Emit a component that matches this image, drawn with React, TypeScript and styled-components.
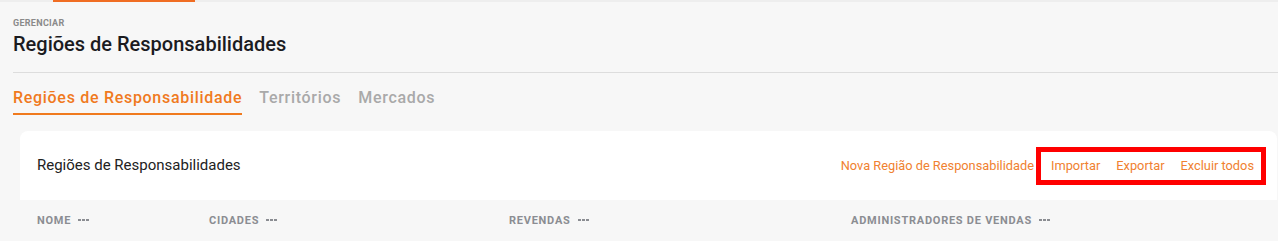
import styled, { createGlobalStyle } from "styled-components";

const GlobalStyle = createGlobalStyle`
  html, body {
    margin: 0;
    padding: 0;
    background: #f7f7f7;
    font-family: Roboto, "Liberation Sans", sans-serif;
  }
`;

const TopStrip = styled.div`
  height: 2px;
  background: #eeeeee;
  display: flex;
`;

const TopMark = styled.div`
  margin-left: 53px;
  width: 142px;
  height: 2px;
  background: #f06d23;
`;

const Page = styled.div`
  padding: 0 0 0 13px;
`;

const Header = styled.header`
  padding-top: 16px;
  height: 54px;
  border-bottom: 1px solid #dddddd;
`;

const Eyebrow = styled.div`
  font-size: 9px;
  font-weight: 700;
  color: #8a8a8a;
  letter-spacing: 0.3px;
  line-height: 11px;
`;

const Title = styled.h1`
  margin: 3px 0 0;
  font-size: 20px;
  font-weight: 500;
  color: #1b1b1f;
  line-height: 24px;
`;

const Tabs = styled.nav`
  display: flex;
  gap: 17px;
  padding-top: 14px;
`;

const Tab = styled.div<{ $active?: boolean }>`
  font-size: 16px;
  font-weight: 500;
  letter-spacing: 0.7px;
  line-height: 22px;
  padding-bottom: 4px;
  color: ${(p) => (p.$active ? "#f07a1e" : "#a9a9a9")};
  border-bottom: 2px solid ${(p) => (p.$active ? "#f07a1e" : "transparent")};
`;

const Card = styled.section`
  margin: 16px 1px 0 7px;
  background: #ffffff;
  border-radius: 8px 8px 0 0;
  overflow: hidden;
`;

const CardHead = styled.div`
  height: 69px;
  display: flex;
  align-items: center;
  justify-content: space-between;
  padding: 0 11px 0 17px;
`;

const CardTitle = styled.h2`
  margin: 0 0 2px;
  font-size: 15px;
  font-weight: 400;
  color: #222222;
`;

const Actions = styled.div`
  display: flex;
  align-items: center;
`;

const Annotated = styled.div`
  display: flex;
  align-items: center;
  gap: 16px;
  height: 28px;
  padding: 0 7px 0 10px;
  margin-left: 2px;
  border: 5px solid #ff0000;
`;

const Action = styled.span`
  font-size: 12.8px;
  color: #f08130;
  white-space: nowrap;
`;

const TableHead = styled.div`
  display: grid;
  grid-template-columns: 172px 300px 342px 1fr;
  align-items: center;
  height: 40px;
  padding-left: 17px;
  background: #f7f7f7;
`;

const Col = styled.div`
  font-size: 11px;
  font-weight: 700;
  color: #8b8d92;
  letter-spacing: 0.75px;
  display: flex;
  gap: 7px;
  align-items: center;
`;

const Dots = styled.span`
  width: 11px;
  height: 2px;
  background: repeating-linear-gradient(
    to right,
    #8b8d92 0 3px,
    transparent 3px 4px
  );
`;

const columns = ["NOME", "CIDADES", "REVENDAS", "ADMINISTRADORES DE VENDAS"];

export default function App() {
  return (
    <>
      <GlobalStyle />
      <TopStrip>
        <TopMark />
      </TopStrip>
      <Page>
        <Header>
          <Eyebrow>GERENCIAR</Eyebrow>
          <Title>Regiões de Responsabilidades</Title>
        </Header>
        <Tabs>
          <Tab $active>Regiões de Responsabilidade</Tab>
          <Tab>Territórios</Tab>
          <Tab>Mercados</Tab>
        </Tabs>
        <Card>
          <CardHead>
            <CardTitle>Regiões de Responsabilidades</CardTitle>
            <Actions>
              <Action>Nova Região de Responsabilidade</Action>
              <Annotated>
                <Action>Importar</Action>
                <Action>Exportar</Action>
                <Action>Excluir todos</Action>
              </Annotated>
            </Actions>
          </CardHead>
          <TableHead>
            {columns.map((c) => (
              <Col key={c}>
                {c}
                <Dots />
              </Col>
            ))}
          </TableHead>
        </Card>
      </Page>
    </>
  );
}
